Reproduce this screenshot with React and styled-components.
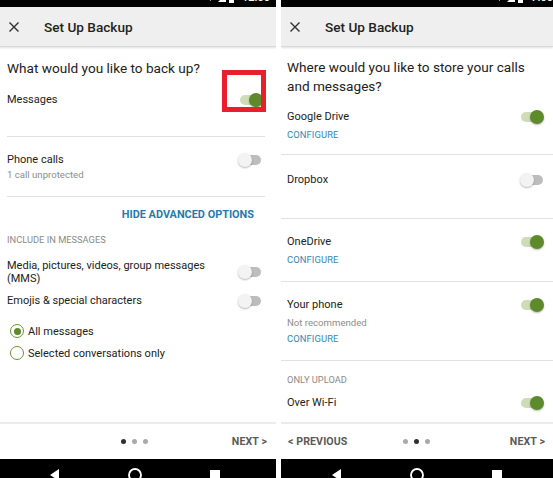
import React from 'react';
import styled, { createGlobalStyle } from 'styled-components';

const Global = createGlobalStyle`
  html, body { margin: 0; padding: 0; background: #fff; }
  body { font-family: Roboto, "Noto Sans", Arial, sans-serif; color: #212121; }
  * { box-sizing: border-box; }
`;

const Page = styled.div`
  display: flex;
  gap: 5px;
  width: 553px;
  height: 478px;
  overflow: hidden;
  background: #fff;
`;

const Screen = styled.div`
  flex: none;
  width: ${p => p.$w}px;
  height: 478px;
  display: flex;
  flex-direction: column;
  background: #fff;
  overflow: hidden;
`;

const StatusBar = styled.div`
  flex: none;
  height: 7px;
  background: #000;
  overflow: hidden;
  display: flex;
  align-items: flex-end;
  justify-content: flex-end;
  padding-right: ${p => p.$pr}px;
`;

const StatusInner = styled.div`
  flex: none;
  height: 18px;
  display: flex;
  align-items: center;
  gap: 3px;
  color: #fff;
  font-size: 11px;
  line-height: 18px;
`;

const StatusTime = styled.span`
  margin-left: 5px;
  font-weight: 500;
`;

const AppBar = styled.div`
  flex: none;
  height: 40px;
  background: #efefef;
  border-bottom: 1px solid #d9d9d9;
  box-shadow: 0 1px 2px rgba(0, 0, 0, 0.12);
  display: flex;
  align-items: center;
  padding-left: 9px;
  position: relative;
  z-index: 1;
`;

const CloseIcon = styled.svg`
  width: 10px;
  height: 10px;
  flex: none;
`;

const Title = styled.div`
  margin-left: 25px;
  font-size: 13.6px;
  font-weight: 500;
  color: #222;
`;

const Content = styled.div`
  flex: 1;
  min-height: 0;
  overflow: hidden;
  padding: 0 ${p => p.$pr}px 0 ${p => p.$pl}px;
`;

const Heading = styled.div`
  margin-top: 11px;
  font-size: 13.6px;
  line-height: ${p => p.$lh || 20}px;
  color: #222;
  padding-left: ${p => p.$pl || 0}px;
`;

const Row = styled.div`
  position: relative;
  display: flex;
  align-items: ${p => (p.$center ? 'center' : 'flex-start')};
  justify-content: space-between;
  padding: ${p => p.$pt || 0}px ${p => p.$pr || 0}px ${p => p.$pb || 0}px ${p => p.$pl || 0}px;
  margin-top: ${p => p.$mt || 0}px;
`;

const RowText = styled.div`
  display: flex;
  flex-direction: column;
`;

const RowTitle = styled.div`
  font-size: 11px;
  line-height: ${p => p.$lh || 16}px;
  color: #222;
  max-width: ${p => p.$max || 'none'};
`;

const SubText = styled.div`
  margin-top: ${p => p.$mt || 0}px;
  font-size: 9.6px;
  line-height: 14px;
  color: #8d8d8d;
`;

const Configure = styled.div`
  margin-top: ${p => p.$mt || 4}px;
  font-size: 9.4px;
  line-height: 12px;
  color: #3487b8;
  letter-spacing: 0.1px;
`;

const Divider = styled.div`
  height: 1px;
  background: #e2e2e2;
`;

const AdvancedLink = styled.div`
  margin-top: 11px;
  padding-right: 11px;
  text-align: right;
  font-size: 10.9px;
  line-height: 14px;
  font-weight: 700;
  color: #1f7bb0;
`;

const SectionLabel = styled.div`
  margin-top: ${p => p.$mt}px;
  padding-left: ${p => p.$pl || 0}px;
  font-size: 9.3px;
  line-height: 12px;
  color: #8a8a8a;
`;

const ToggleBox = styled.span`
  position: relative;
  flex: none;
  width: 24px;
  height: 16px;
  margin-right: ${p => p.$mr || 0}px;

  &::before {
    content: '';
    position: absolute;
    left: 1px;
    right: 1px;
    top: 3px;
    height: 10px;
    border-radius: 5px;
    background: ${p => (p.$on ? '#cfdcb8' : '#bdbdbd')};
  }

  &::after {
    content: '';
    position: absolute;
    top: 1px;
    ${p => (p.$on ? 'right: 0;' : 'left: 0;')}
    width: 14px;
    height: 14px;
    border-radius: 50%;
    background: ${p => (p.$on ? '#5d8a2a' : '#f3f3f3')};
    box-shadow: 0 1px 2px rgba(0, 0, 0, 0.28);
  }
`;

const Highlight = styled.div`
  position: absolute;
  left: 215px;
  top: -8px;
  width: 44px;
  height: 42px;
  border: 5px solid #e8202b;
`;

const RadioList = styled.div`
  margin-top: 11px;
  display: flex;
  flex-direction: column;
`;

const RadioRow = styled.label`
  display: flex;
  align-items: center;
  height: 22px;
  padding-left: 3px;
  font-size: 11px;
  color: #222;
`;

const RadioCircle = styled.span`
  flex: none;
  width: 14px;
  height: 14px;
  border-radius: 50%;
  border: 1.5px solid #6b9432;
  margin-right: 4px;
  display: flex;
  align-items: center;
  justify-content: center;

  &::after {
    content: '';
    width: 7px;
    height: 7px;
    border-radius: 50%;
    background: ${p => (p.$checked ? '#5d8a2a' : 'transparent')};
  }
`;

const Footer = styled.div`
  flex: none;
  height: 37px;
  border-top: 2px solid #ececec;
  display: grid;
  grid-template-columns: 1fr auto 1fr;
  align-items: center;
  padding: 0 ${p => p.$pr}px 0 ${p => p.$pl}px;
`;

const FooterButton = styled.div`
  justify-self: ${p => (p.$end ? 'end' : 'start')};
  font-size: 10.6px;
  font-weight: 700;
  color: #5a5a5a;
  letter-spacing: 0.1px;
`;

const Dots = styled.div`
  display: flex;
  gap: 6px;
  margin-right: ${p => p.$mr || 0}px;
`;

const Dot = styled.span`
  width: 5px;
  height: 5px;
  border-radius: 50%;
  background: ${p => (p.$active ? '#2e2e2e' : '#a9a9a9')};
`;

const NavBar = styled.div`
  flex: none;
  height: 19px;
  background: #000;
  overflow: hidden;
  display: flex;
  justify-content: center;
  align-items: flex-start;
  gap: 66px;
  padding-top: 9px;
  padding-right: ${p => p.$pr || 0}px;
`;

const NavIcon = styled.svg`
  flex: none;
  width: 14px;
  height: 14px;
`;

const Toggle = ({ on, mr }) => <ToggleBox $on={on} $mr={mr} />;

const Close = () => (
  <CloseIcon viewBox="0 0 10 10">
    <path d="M1 1 L9 9 M9 1 L1 9" stroke="#333" strokeWidth="1.4" strokeLinecap="square" />
  </CloseIcon>
);

const Wifi = () => (
  <svg width="9" height="8" viewBox="0 0 9 8">
    <path d="M0 0 H9 L4.5 7 Z" fill="#fff" />
  </svg>
);

const Signal = () => (
  <svg width="8" height="8" viewBox="0 0 8 8">
    <path d="M8 0 V8 H0 Z" fill="#fff" />
  </svg>
);

const Battery = () => (
  <svg width="5" height="9" viewBox="0 0 5 9">
    <rect x="0" y="1" width="5" height="8" fill="#fff" />
    <rect x="1.5" y="0" width="2" height="1" fill="#fff" />
  </svg>
);

const NavIcons = () => (
  <>
    <NavIcon viewBox="0 0 14 14">
      <path d="M11 1 V13 L2 7 Z" fill="#fff" />
    </NavIcon>
    <NavIcon viewBox="0 0 14 14">
      <circle cx="7" cy="7" r="6" fill="none" stroke="#fff" strokeWidth="1.8" />
    </NavIcon>
    <NavIcon viewBox="0 0 14 14">
      <rect x="2" y="2" width="10" height="10" fill="#fff" />
    </NavIcon>
  </>
);

const LeftScreen = () => (
  <Screen $w={276}>
    <StatusBar $pr={6}>
      <StatusInner>
        <Wifi />
        <Signal />
        <Battery />
        <StatusTime>12:00</StatusTime>
      </StatusInner>
    </StatusBar>
    <AppBar>
      <Close />
      <Title>Set Up Backup</Title>
    </AppBar>
    <Content $pl={7} $pr={11}>
      <Heading>What would you like to back up?</Heading>
      <Row $pt={14} $pb={28}>
        <RowTitle>Messages</RowTitle>
        <Toggle on mr={2} />
        <Highlight />
      </Row>
      <Divider />
      <Row $pt={15} $pb={14}>
        <RowText>
          <RowTitle>Phone calls</RowTitle>
          <SubText>1 call unprotected</SubText>
        </RowText>
        <Toggle mr={3} />
      </Row>
      <Divider />
      <AdvancedLink>HIDE ADVANCED OPTIONS</AdvancedLink>
      <SectionLabel $mt={12}>INCLUDE IN MESSAGES</SectionLabel>
      <Row $mt={13} $center>
        <RowTitle $lh={13} $max="205px">Media, pictures, videos, group messages (MMS)</RowTitle>
        <Toggle mr={3} />
      </Row>
      <Row $mt={8} $center>
        <RowTitle $lh={14}>Emojis &amp; special characters</RowTitle>
        <Toggle mr={3} />
      </Row>
      <RadioList>
        <RadioRow>
          <RadioCircle $checked />
          All messages
        </RadioRow>
        <RadioRow>
          <RadioCircle />
          Selected conversations only
        </RadioRow>
      </RadioList>
    </Content>
    <Footer $pl={8} $pr={9}>
      <span />
      <Dots $mr={6}>
        <Dot $active />
        <Dot />
        <Dot />
      </Dots>
      <FooterButton $end>NEXT &gt;</FooterButton>
    </Footer>
    <NavBar $pr={6}>
      <NavIcons />
    </NavBar>
  </Screen>
);

const RightScreen = () => (
  <Screen $w={272}>
    <StatusBar $pr={0}>
      <StatusInner>
        <Wifi />
        <Signal />
        <Battery />
        <StatusTime>7:00</StatusTime>
      </StatusInner>
    </StatusBar>
    <AppBar>
      <Close />
      <Title>Set Up Backup</Title>
    </AppBar>
    <Content $pl={0} $pr={0}>
      <Heading $lh={19} $pl={6}>
        Where would you like to store your calls
        <br />
        and messages?
      </Heading>
      <Row $pt={13} $pb={13} $pl={6} $pr={9}>
        <RowText>
          <RowTitle>Google Drive</RowTitle>
          <Configure>CONFIGURE</Configure>
        </RowText>
        <Toggle on />
      </Row>
      <Divider />
      <Row $pt={17} $pb={30} $pl={6} $pr={9}>
        <RowTitle>Dropbox</RowTitle>
        <Toggle />
      </Row>
      <Divider />
      <Row $pt={15} $pb={15} $pl={6} $pr={9}>
        <RowText>
          <RowTitle>OneDrive</RowTitle>
          <Configure>CONFIGURE</Configure>
        </RowText>
        <Toggle on />
      </Row>
      <Divider />
      <Row $pt={15} $pb={15} $pl={6} $pr={9}>
        <RowText>
          <RowTitle>Your phone</RowTitle>
          <SubText $mt={3}>Not recommended</SubText>
          <Configure $mt={3}>CONFIGURE</Configure>
        </RowText>
        <Toggle on />
      </Row>
      <Divider />
      <SectionLabel $mt={13} $pl={6}>ONLY UPLOAD</SectionLabel>
      <Row $mt={9} $pl={6} $pr={9}>
        <RowTitle>Over Wi-Fi</RowTitle>
        <Toggle on />
      </Row>
    </Content>
    <Footer $pl={7} $pr={8}>
      <FooterButton>&lt; PREVIOUS</FooterButton>
      <Dots>
        <Dot />
        <Dot $active />
        <Dot />
      </Dots>
      <FooterButton $end>NEXT &gt;</FooterButton>
    </Footer>
    <NavBar>
      <NavIcons />
    </NavBar>
  </Screen>
);

export default function App() {
  return (
    <>
      <Global />
      <Page>
        <LeftScreen />
        <RightScreen />
      </Page>
    </>
  );
}
